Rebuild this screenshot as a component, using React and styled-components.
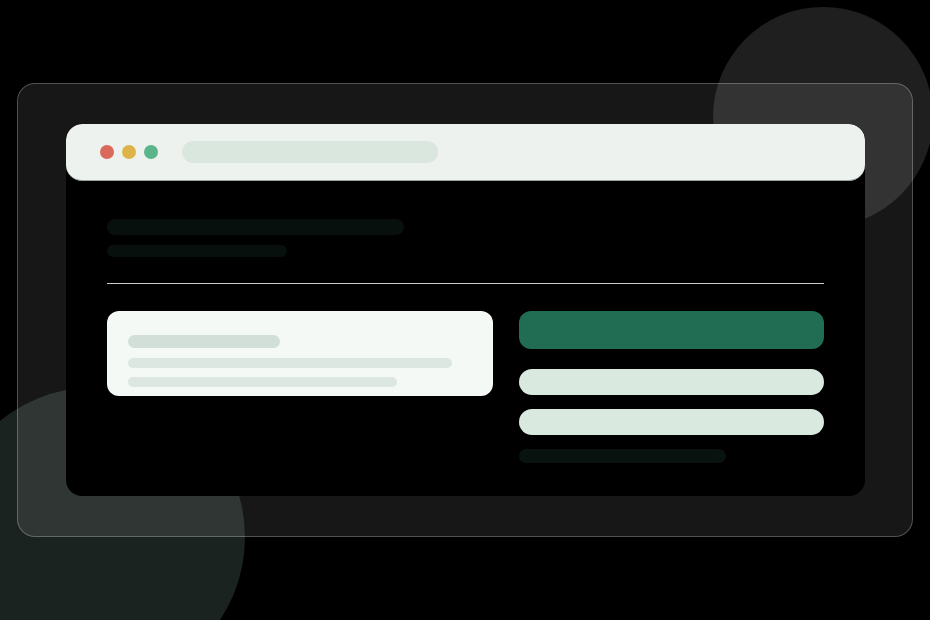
import styled, { createGlobalStyle } from "styled-components";

const Global = createGlobalStyle`
  html, body {
    margin: 0;
    background: #000;
    font-family: "Inter", "Liberation Sans", sans-serif;
  }
`;

const Page = styled.div`
  position: relative;
  width: 930px;
  height: 620px;
  overflow: hidden;
  background: #000;
  display: flex;
  align-items: center;
  justify-content: center;
`;

const Blob = styled.div`
  position: absolute;
  left: ${(p) => p.x - p.r}px;
  top: ${(p) => p.y - p.r}px;
  width: ${(p) => p.r * 2}px;
  height: ${(p) => p.r * 2}px;
  border-radius: 50%;
  background: ${(p) => p.color};
`;

const Frame = styled.div`
  position: relative;
  box-sizing: border-box;
  width: 896px;
  height: 454px;
  border: 1px solid rgba(255, 255, 255, 0.25);
  border-radius: 18px;
  background: rgba(255, 255, 255, 0.09);
  display: flex;
  align-items: center;
  justify-content: center;
`;

const Window = styled.div`
  width: 799px;
  height: 372px;
  border-radius: 16px;
  overflow: hidden;
  background: #000;
  display: flex;
  flex-direction: column;
`;

const TitleBar = styled.div`
  height: 57px;
  background: #edf2ee;
  border-bottom: 1px solid #9aa29d;
  box-sizing: border-box;
  border-radius: 16px;
  display: flex;
  align-items: center;
  padding-left: 34px;
`;

const Dot = styled.span`
  width: 14px;
  height: 14px;
  border-radius: 50%;
  background: ${(p) => p.color};
  margin-right: 8px;
`;

const UrlBar = styled.div`
  width: 256px;
  height: 22px;
  border-radius: 11px;
  background: #dae7de;
  margin-left: 16px;
`;

const Body = styled.div`
  flex: 1;
  padding: 38px 41px 0;
`;

const Bar = styled.div`
  width: ${(p) => p.w}px;
  height: ${(p) => p.h}px;
  border-radius: ${(p) => p.h / 2}px;
  background: ${(p) => p.color};
  margin-top: ${(p) => p.mt || 0}px;
`;

const Divider = styled.div`
  height: 1px;
  background: #c9cdcb;
  margin: 26px 0 27px;
`;

const Columns = styled.div`
  display: grid;
  grid-template-columns: 386px 1fr;
  gap: 26px;
  align-items: start;
`;

const Card = styled.div`
  height: 85px;
  box-sizing: border-box;
  border-radius: 12px;
  background: #f5f9f6;
  padding: 24px 21px 0;
`;

const Side = styled.div`
  display: flex;
  flex-direction: column;
`;

const PrimaryButton = styled.div`
  height: 38px;
  border-radius: 12px;
  background: #216d54;
`;

const Field = styled.div`
  height: 26px;
  border-radius: 13px;
  background: #d9e9df;
  margin-top: ${(p) => p.mt}px;
`;

export default function App() {
  return (
    <>
      <Global />
      <Page>
        <Blob x={823} y={117} r={110} color="#1f1f1f" />
        <Blob x={95} y={537} r={150} color="#1b2320" />
        <Frame>
          <Window>
            <TitleBar>
              <Dot color="#d9695a" />
              <Dot color="#ddb44a" />
              <Dot color="#5bb58a" />
              <UrlBar />
            </TitleBar>
            <Body>
              <Bar w={297} h={16} color="#08100d" />
              <Bar w={180} h={12} color="#08100d" mt={10} />
              <Divider />
              <Columns>
                <Card>
                  <Bar w={152} h={13} color="#d2dfd8" />
                  <Bar w={324} h={10} color="#dde7e1" mt={10} />
                  <Bar w={269} h={10} color="#dde7e1" mt={9} />
                </Card>
                <Side>
                  <PrimaryButton />
                  <Field mt={20} />
                  <Field mt={14} />
                  <Bar w={207} h={14} color="#08130f" mt={14} />
                </Side>
              </Columns>
            </Body>
          </Window>
        </Frame>
      </Page>
    </>
  );
}
